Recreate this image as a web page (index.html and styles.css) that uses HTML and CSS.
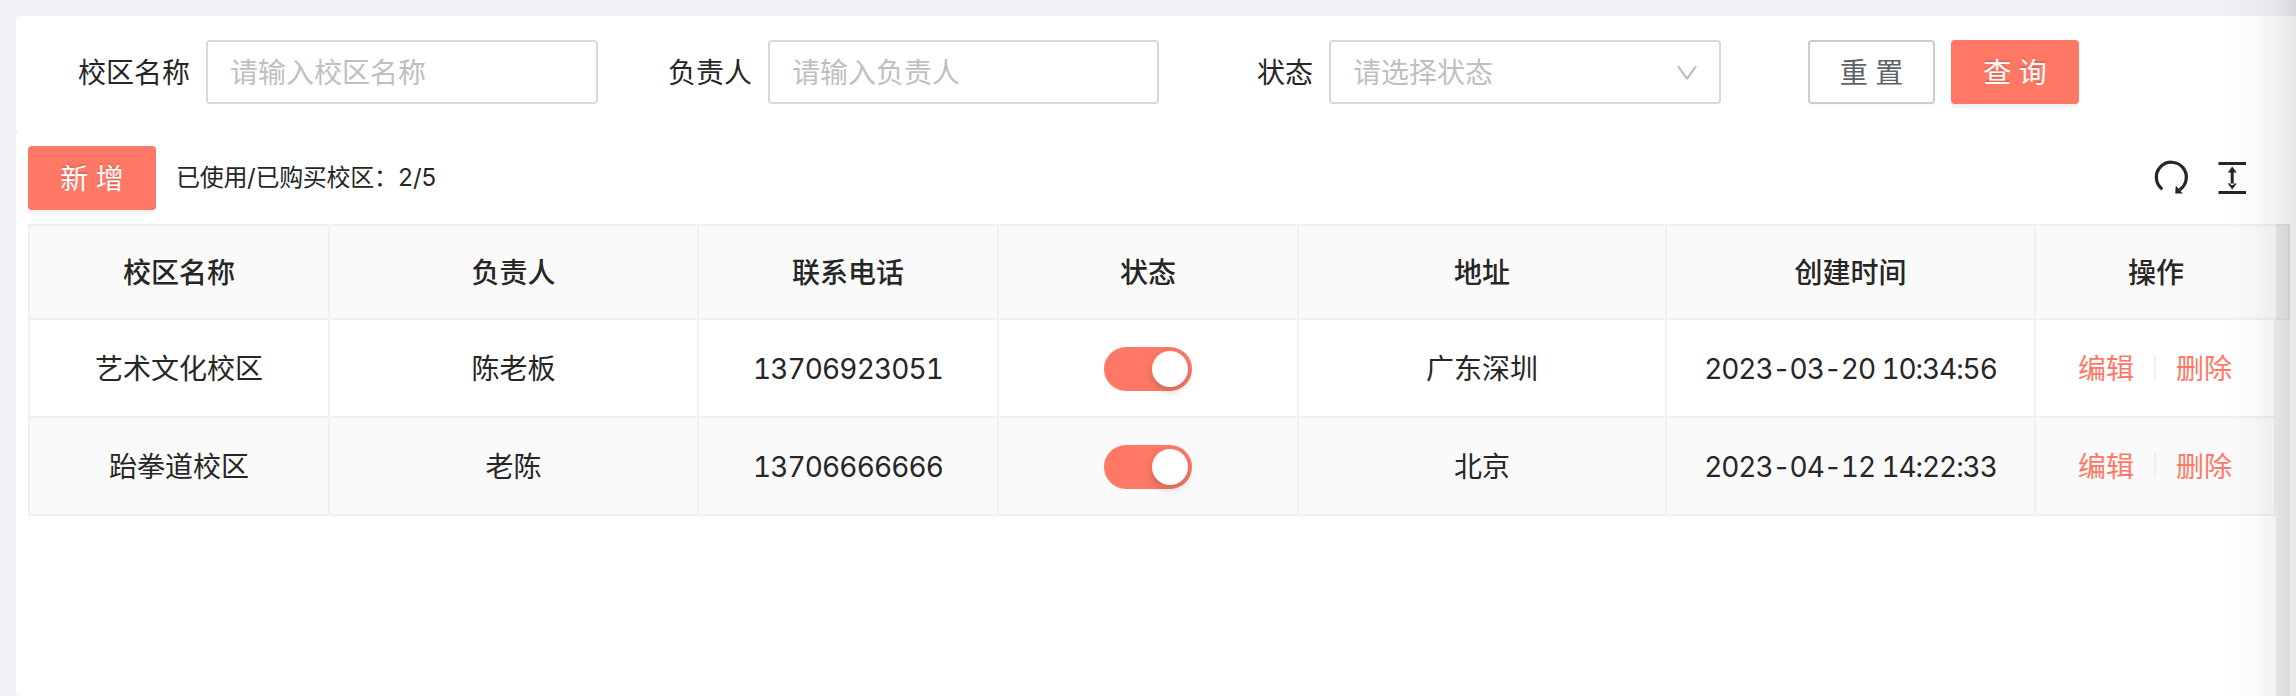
FILE: index.html
```html
<!DOCTYPE html>
<html lang="zh-CN">
<head>
<meta charset="utf-8">
<title>校区管理</title>
<link rel="stylesheet" href="styles.css">
</head>
<body>
<main class="page">
  <section class="card search">
    <label class="field field-name"><span class="label">校区名称</span><input class="control" placeholder="请输入校区名称"></label>
    <label class="field field-owner"><span class="label">负责人</span><input class="control" placeholder="请输入负责人"></label>
    <div class="field field-status"><span class="label">状态</span>
      <div class="control select"><span>请选择状态</span>
        <svg class="arrow" viewBox="64 64 896 896"><path fill="currentColor" d="M884 256h-75c-5.100 0-9.900 2.500-12.900 6.600L512 654.200 227.900 262.600c-3-4.100-7.800-6.600-12.900-6.600h-75c-6.500 0-10.300 7.400-6.500 12.700l352.600 486.100c12.800 17.600 39 17.600 51.700 0l352.600-486.100c3.900-5.300.1-12.700-6.400-12.700z"/></svg>
      </div>
    </div>
    <div class="actions"><button class="btn btn-default">重 置</button><button class="btn btn-primary">查 询</button></div>
  </section>
  <section class="card list">
    <div class="toolbar">
      <button class="btn btn-primary">新 增</button>
      <span class="usage">已使用/已购买校区：2/5</span>
      <div class="tools">
        <svg class="tool" viewBox="0 0 36 36"><path d="M9.300 29.200A15 15 0 1 1 26.500 29.800" fill="none" stroke="currentColor" stroke-width="3.200"/><path d="M22.800 25.600l6.800 7.900h-7.400z" fill="currentColor"/></svg>
        <svg class="tool" viewBox="0 0 36 36"><path d="M4.500 2h27.500v3H4.500zM4.500 31h27.500v3H4.500zM16.700 11h3v14h-3zM18.200 6.500l4.500 6h-9zM18.200 29.500l4.500-6h-9z" fill="currentColor"/></svg>
      </div>
    </div>
    <div class="table-wrap">
      <table class="table">
        <colgroup><col class="w302"><col class="w369"><col class="w300"><col class="w300"><col class="w368"><col class="w369"><col class="w240"></colgroup>
        <thead><tr><th>校区名称</th><th>负责人</th><th>联系电话</th><th>状态</th><th>地址</th><th>创建时间</th><th>操作</th></tr></thead>
        <tbody>
          <tr><td>艺术文化校区</td><td>陈老板</td><td class="phone">13706923051</td><td><span class="switch"></span></td><td>广东深圳</td><td class="time">2023-03-20 10:34:56</td><td><div class="ops"><a>编辑</a><i class="divider"></i><a>删除</a></div></td></tr>
          <tr><td>跆拳道校区</td><td>老陈</td><td class="phone">13706666666</td><td><span class="switch"></span></td><td>北京</td><td class="time">2023-04-12 14:22:33</td><td><div class="ops"><a>编辑</a><i class="divider"></i><a>删除</a></div></td></tr>
        </tbody>
      </table>
      <div class="gutter"><div class="gutter-head"></div></div>
    </div>
  </section>
</main>
<div class="edge-shadow"></div>
</body>
</html>
```
FILE: styles.css
```css
* { box-sizing: border-box; }
body {
  margin: 0;
  height: 696px;
  overflow: hidden;
  background: #f0f1f6;
  color: #262626;
  font: 28px/44px Inter, "Noto Sans CJK SC", sans-serif;
  font-variant-numeric: tabular-nums;
}
.page { height: 696px; padding: 16px 0 0 16px; display: flex; flex-direction: column; }
.card { background: #fff; border-radius: 4px 0 0 4px; }
.search { height: 116px; padding: 24px 0 0 62px; display: flex; align-items: flex-start; }
.field { display: flex; align-items: center; gap: 16px; height: 64px; white-space: nowrap; }
.label { padding-top: 2px; }
.field-owner { margin-left: 70px; }
.field-status { margin-left: 98px; }
.control {
  width: 392px;
  height: 64px;
  padding: 2px 22px 0;
  border: 2px solid #d9d9d9;
  border-radius: 4px;
  background: #fff;
  font: inherit;
  outline: 0;
}
.field-owner .control { width: 391px; }
.control::placeholder { color: #bfbfbf; opacity: 1; }
.select { display: flex; align-items: center; justify-content: space-between; padding-right: 20px; color: #bfbfbf; }
.arrow { width: 24px; height: 24px; }
.actions { display: flex; gap: 16px; margin-left: 87px; }
.btn {
  width: 128px;
  height: 64px;
  padding: 1px 0 0;
  border: 2px solid #ff7866;
  border-radius: 4px;
  font: inherit;
  color: #fff;
}
.btn-primary { background: #ff7866; text-shadow: 0 -2px 0 rgba(0, 0, 0, .12); box-shadow: 0 4px 0 rgba(0, 0, 0, .045); }
.btn-default { width: 127px; background: #fff; border-color: #ccc; color: #606266; box-shadow: 0 4px 0 rgba(0, 0, 0, .016); }
.list { flex: 1; padding: 14px 6px 0 12px; display: flex; flex-direction: column; }
.toolbar { display: flex; align-items: center; height: 64px; margin-bottom: 14px; }
.usage { margin-left: 20px; font-size: 24px; letter-spacing: -.3px; }
.tools { display: flex; gap: 25px; margin-left: auto; padding: 0 40px 0 0; }
.tool { width: 36px; height: 36px; }
.table-wrap { display: flex; flex: 1; }
.table { width: 2248px; flex: none; align-self: flex-start; table-layout: fixed; border-collapse: separate; border-spacing: 0; }
.w300 { width: 300px; }
.w302 { width: 302px; }
.w368 { width: 368px; }
.w369 { width: 369px; }
.w240 { width: 240px; }
.table th, .table td { padding: 2px 0 0; text-align: center; border-right: 2px solid #f0f0f0; border-bottom: 2px solid #f0f0f0; }
.table th:first-child, .table td:first-child { border-left: 2px solid #f0f0f0; }
.table th { height: 96px; border-top: 2px solid #f0f0f0; background: #fafafa; font-weight: 500; }
.table th:last-child { border-right: 0; }
.table td { height: 98px; }
.table .phone { letter-spacing: -.87px; }
.table .time { letter-spacing: -1.08px; }
.table tbody tr:nth-child(even) { background: #fafafa; }
.switch {
  display: flex;
  justify-content: flex-end;
  width: 88px;
  height: 44px;
  margin: 0 auto;
  padding: 4px;
  border-radius: 22px;
  background: #ff7866;
}
.switch::after { content: ""; width: 36px; height: 36px; border-radius: 50%; background: #fff; box-shadow: 0 4px 8px rgba(0, 35, 11, .2); }
.ops { display: flex; align-items: center; justify-content: center; gap: 20px; color: #ff7866; }
.divider { width: 2px; height: 25px; margin-bottom: 3px; background: #f0f0f0; }
.gutter { width: 14px; background: #f0f0f0; }
.gutter-head { height: 96px; border: 2px solid #e2e2e2; border-left: 0; background: #ebebeb; }
.edge-shadow {
  position: absolute;
  top: 0;
  right: 0;
  width: 70px;
  height: 696px;
  pointer-events: none;
  background: linear-gradient(to right, rgba(0, 0, 0, 0), rgba(0, 0, 0, .018) 40%, rgba(0, 0, 0, .052) 72%, rgba(0, 0, 0, .1));
}
```
